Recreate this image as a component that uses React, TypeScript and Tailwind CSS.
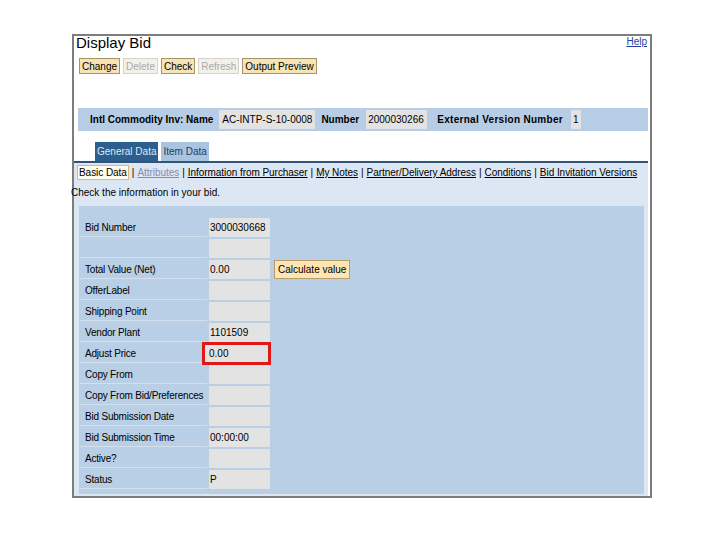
import React from 'react';

type Row = {
  label: string;
  value: string;
  highlight?: boolean;
  action?: string;
};

const rows: Row[] = [
  { label: 'Bid Number', value: '3000030668' },
  { label: '', value: '' },
  { label: 'Total Value (Net)', value: '0.00', action: 'Calculate value' },
  { label: 'OfferLabel', value: '' },
  { label: 'Shipping Point', value: '' },
  { label: 'Vendor Plant', value: '1101509' },
  { label: 'Adjust Price', value: '0.00', highlight: true },
  { label: 'Copy From', value: '' },
  { label: 'Copy From Bid/Preferences', value: '' },
  { label: 'Bid Submission Date', value: '' },
  { label: 'Bid Submission Time', value: '00:00:00' },
  { label: 'Active?', value: '' },
  { label: 'Status', value: 'P' },
];

const toolbar = [
  { label: 'Change', disabled: false },
  { label: 'Delete', disabled: true },
  { label: 'Check', disabled: false },
  { label: 'Refresh', disabled: true },
  { label: 'Output Preview', disabled: false },
];

const links = [
  'Attributes',
  'Information from Purchaser',
  'My Notes',
  'Partner/Delivery Address',
  'Conditions',
  'Bid Invitation Versions',
];

const App = () => {
  return (
    <div className="h-[540px] w-[720px] bg-white pl-[72px] pt-[34px] font-['Liberation_Sans',Arial,sans-serif] text-black">
      {/* 外枠 */}
      <div className="flex h-[464px] w-[580px] flex-col border-2 border-[#7d7d7d] bg-white">
        {/* タイトル行 */}
        <div className="flex h-[18px] shrink-0 items-start justify-between pl-[2px] pr-[3px]">
          <span className="-mt-[1px] text-[15px] leading-none">Display Bid</span>
          <a className="mt-[1px] text-[10px] leading-none text-[#1f3f9f] underline">Help</a>
        </div>

        {/* ボタン */}
        <div className="mt-[4px] flex shrink-0 gap-[3px] pl-[5px]">
          {toolbar.map((b) => (
            <div
              key={b.label}
              className={
                b.disabled
                  ? 'flex h-[16px] items-center border border-[#d6d2c6] bg-[#f4f1ea] px-[2px] text-[10px] text-[#a9a9a9]'
                  : 'flex h-[16px] items-center border border-[#a89266] bg-[#f6e3b6] px-[2px] text-[10px] text-black'
              }
            >
              {b.label}
            </div>
          ))}
        </div>

        {/* ヘッダー情報 */}
        <div className="ml-[4px] mr-[2px] mt-[34px] flex h-[23px] shrink-0 items-center bg-[#b7cde5] pl-[12px] text-[10px]">
          <span className="font-bold">Intl Commodity Inv: Name</span>
          <span className="ml-[6px] flex h-[19px] items-center bg-[#e3e3e3] px-[3px]">AC-INTP-S-10-0008</span>
          <span className="ml-[6px] font-bold">Number</span>
          <span className="ml-[7px] flex h-[19px] w-[61px] items-center bg-[#e3e3e3] px-[2px]">2000030266</span>
          <span className="ml-[10px] font-bold tracking-[0.3px]">External Version Number</span>
          <span className="ml-[8px] flex h-[19px] items-center bg-[#e3e3e3] px-[2px]">1</span>
        </div>

        {/* タブ */}
        <div className="mt-[11px] flex shrink-0 gap-[3px] pl-[21px]">
          <div className="flex h-[19px] items-center bg-[#2c5e8e] px-[2px] text-[10px] text-[#dfe9f3]">
            General Data
          </div>
          <div className="flex h-[19px] items-center bg-[#a9c4e1] px-[2px] text-[10px] text-[#1f3c5c]">
            Item Data
          </div>
        </div>

        {/* 内容エリア */}
        <div className="mr-[2px] flex min-h-0 flex-1 flex-col border-t-2 border-[#2f5579] bg-[#dde7f3]">
          <div className="mt-[2px] flex h-[15px] shrink-0 items-center whitespace-nowrap pl-[3px] text-[10px] tracking-[-0.05px]">
            <span className="flex h-[15px] items-center border border-[#d8b87a] bg-[#fffbee] px-[1px]">Basic Data</span>
            {links.map((l, i) => (
              <React.Fragment key={l}>
                <span className="mx-[3px]">|</span>
                <span className={i === 0 ? 'text-[#8a8ab0] underline' : 'underline'}>{l}</span>
              </React.Fragment>
            ))}
          </div>
          <div className="-ml-[3px] mt-[7px] h-[12px] shrink-0 text-[10px] leading-[12px]">
            Check the information in your bid.
          </div>

          {/* フォーム */}
          <div className="mb-[2px] ml-[5px] mr-[4px] mt-[7px] flex flex-1 flex-col bg-[#b9cfe6] pl-[1px] pt-[12px]">
            {rows.map((r, i) => (
              <div key={i} className="flex h-[21px] shrink-0 items-start">
                <div className="flex h-[19px] w-[127px] items-center whitespace-nowrap border-b border-[#d3e0ee] pl-[5px] text-[10px] tracking-[-0.2px]">
                  {r.label}
                </div>
                <div
                  className={
                    r.highlight
                      ? 'ml-[-5px] flex h-[23px] w-[69px] -translate-y-[2px] items-center border-[3px] border-[#e01818] bg-[#e3e3e3] pl-[4px] text-[10px]'
                      : 'ml-[2px] flex h-[19px] w-[61px] items-center bg-[#e3e3e3] pl-[1px] text-[10px]'
                  }
                >
                  {r.value}
                </div>
                {r.action && (
                  <div className="ml-[4px] flex h-[19px] items-center border border-[#b89d6a] bg-[#fde6b4] px-[3px] text-[10px]">
                    {r.action}
                  </div>
                )}
              </div>
            ))}
          </div>
        </div>
      </div>
    </div>
  );
};

export default App;
